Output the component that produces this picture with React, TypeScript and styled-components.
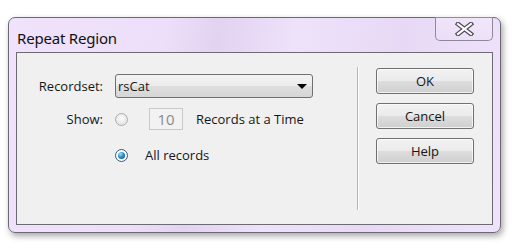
import React, { useState } from "react";
import styled, { createGlobalStyle } from "styled-components";

const GlobalStyle = createGlobalStyle`
  *, *::before, *::after {
    box-sizing: border-box;
  }
  body {
    margin: 0;
    background: #ffffff;
    font-family: "Open Sans", "Noto Sans", sans-serif;
  }
`;

const Page = styled.div`
  padding: 17px 12px 17px 8px;
`;

const Window = styled.div`
  width: 493px;
  height: 216px;
  border: 1px solid #6d6875;
  border-radius: 7px;
  background: linear-gradient(
    100deg,
    #efe2fa 0%,
    #eddff9 30%,
    #e2d3f1 40%,
    #eee2fa 55%,
    #e7d9f5 75%,
    #efe3fb 100%
  );
  box-shadow: 2px 3px 6px rgba(0, 0, 0, 0.35);
  display: flex;
  flex-direction: column;
  padding: 0 7px 7px 7px;
`;

const TitleBar = styled.div`
  height: 34px;
  flex: none;
  display: flex;
  align-items: flex-start;
  justify-content: space-between;
`;

const Title = styled.div`
  font-family: "Noto Sans", sans-serif;
  font-size: 15px;
  color: #111111;
  padding: 10px 0 0 1px;
  letter-spacing: -0.2px;
`;

const CloseButton = styled.div`
  width: 58px;
  height: 24px;
  margin-top: -1px;
  border: 1px solid #8f8899;
  border-top: none;
  border-radius: 0 0 5px 5px;
  background: linear-gradient(rgba(255, 255, 255, 0.25), rgba(255, 255, 255, 0.05));
  display: flex;
  align-items: center;
  justify-content: center;
`;

const Client = styled.div`
  flex: 1;
  border: 1px solid #6e6a74;
  background: #f0f0f0;
  display: flex;
  padding: 14px 0 14px 0;
`;

const FormArea = styled.div`
  width: 340px;
  display: grid;
  grid-template-columns: 86px 1fr;
  column-gap: 12px;
  align-content: start;
  padding-top: 7px;
`;

const Label = styled.div`
  font-size: 13px;
  color: #161616;
  text-align: right;
  align-self: center;
`;

const FieldRow = styled.div<{ $height: number }>`
  display: flex;
  align-items: center;
  height: ${(p) => p.$height}px;
`;

const Select = styled.div`
  width: 198px;
  height: 24px;
  border: 1px solid #707070;
  border-radius: 3px;
  background: linear-gradient(#f3f3f3 0%, #ececec 48%, #dedede 52%, #d6d6d6 100%);
  display: flex;
  align-items: center;
  justify-content: space-between;
  padding: 0 5px 0 2px;
  font-size: 13px;
  color: #161616;
`;

const Arrow = styled.span`
  width: 0;
  height: 0;
  border-left: 5px solid transparent;
  border-right: 5px solid transparent;
  border-top: 5px solid #000;
`;

const Radio = styled.span<{ $checked?: boolean; $disabled?: boolean }>`
  width: 13px;
  height: 13px;
  border-radius: 50%;
  border: 1px solid ${(p) => (p.$disabled ? "#adadad" : "#3c5a7a")};
  background: ${(p) =>
    p.$disabled
      ? "radial-gradient(circle at 50% 40%, #fbfbfb, #dcdcdc)"
      : "radial-gradient(circle at 50% 50%, #ffffff 60%, #d8dde4)"};
  display: inline-flex;
  align-items: center;
  justify-content: center;
  flex: none;

  &::after {
    content: "";
    display: ${(p) => (p.$checked ? "block" : "none")};
    width: 7px;
    height: 7px;
    border-radius: 50%;
    background: radial-gradient(circle at 35% 30%, #9fe0ff 0%, #2b8fd0 45%, #0d4a82 100%);
  }
`;

const NumberBox = styled.div`
  width: 34px;
  height: 22px;
  margin-left: 21px;
  border: 1px solid #c9c9c9;
  background: #f2f2f2;
  color: #8a8a8a;
  font-size: 15px;
  display: flex;
  align-items: center;
  justify-content: center;
`;

const OptionText = styled.span<{ $gap: number }>`
  font-size: 13px;
  color: #161616;
  margin-left: ${(p) => p.$gap}px;
`;

const Separator = styled.div`
  width: 1px;
  background: #b7b7b7;
  box-shadow: 1px 0 0 #ffffff;
`;

const ButtonColumn = styled.div`
  display: flex;
  flex-direction: column;
  gap: 9px;
  margin-left: 18px;
  padding-top: 1px;
`;

const DialogButton = styled.button`
  width: 98px;
  height: 26px;
  border: 1px solid #707070;
  border-radius: 3px;
  background: linear-gradient(#f2f2f2 0%, #ebebeb 48%, #dddddd 52%, #cfcfcf 100%);
  box-shadow: inset 0 0 0 1px rgba(255, 255, 255, 0.7);
  font-family: "Open Sans", "Noto Sans", sans-serif;
  font-size: 13px;
  color: #161616;
  padding: 0;
  cursor: default;
`;

const CloseIcon = () => (
  <svg width="19" height="14" viewBox="0 0 19 14">
    <path d="M3 2 L16 12 M16 2 L3 12" stroke="#4a4650" strokeWidth="4.5" strokeLinecap="square" />
    <path d="M3 2 L16 12 M16 2 L3 12" stroke="#ffffff" strokeWidth="2.2" strokeLinecap="square" />
  </svg>
);

export default function App() {
  const [showAll, setShowAll] = useState(true);

  return (
    <>
      <GlobalStyle />
      <Page>
        <Window>
          <TitleBar>
            <Title>Repeat Region</Title>
            <CloseButton>
              <CloseIcon />
            </CloseButton>
          </TitleBar>
          <Client>
            <FormArea>
              <Label>Recordset:</Label>
              <FieldRow $height={24}>
                <Select>
                  <span>rsCat</span>
                  <Arrow />
                </Select>
              </FieldRow>

              <Label>Show:</Label>
              <FieldRow $height={42}>
                <Radio $disabled={showAll} onClick={() => setShowAll(false)} />
                <NumberBox>10</NumberBox>
                <OptionText $gap={13}>Records at a Time</OptionText>
              </FieldRow>

              <span />
              <FieldRow $height={30}>
                <Radio $checked={showAll} onClick={() => setShowAll(true)} />
                <OptionText $gap={17}>All records</OptionText>
              </FieldRow>
            </FormArea>
            <Separator />
            <ButtonColumn>
              <DialogButton>OK</DialogButton>
              <DialogButton>Cancel</DialogButton>
              <DialogButton>Help</DialogButton>
            </ButtonColumn>
          </Client>
        </Window>
      </Page>
    </>
  );
}
